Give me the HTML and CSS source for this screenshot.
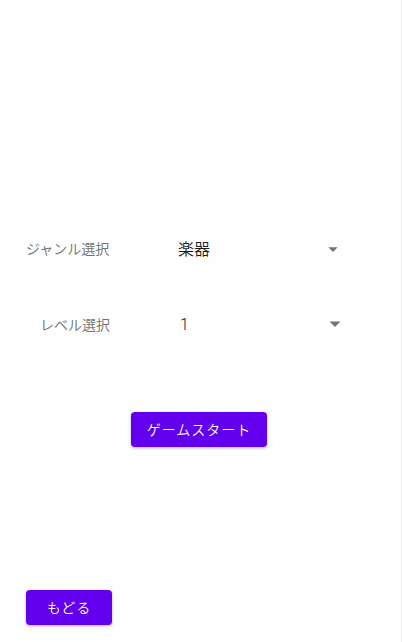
FILE: index.html
```html
<!DOCTYPE html>
<html lang="ja">
<head>
<meta charset="utf-8">
<meta name="viewport" content="width=device-width, initial-scale=1">
<title>ゲーム設定</title>
<link rel="stylesheet" href="styles.css">
</head>
<body>
<form class="screen">
  <div class="row">
    <label class="label" for="genre">ジャンル選択</label>
    <div class="spinner spinner-genre">
      <select id="genre"><option>楽器</option></select>
      <svg class="arrow" width="10" height="5" viewBox="0 0 10 5" aria-hidden="true"><path d="M0.3 0.3h9.4L5 5z"/></svg>
    </div>
  </div>
  <div class="row">
    <label class="label label-level" for="level">レベル選択</label>
    <div class="spinner spinner-level">
      <select id="level"><option>1</option></select>
      <svg class="arrow" width="12" height="6" viewBox="0 0 12 6" aria-hidden="true"><path d="M0.5 0.5h11L6 6z"/></svg>
    </div>
  </div>
  <button class="button start" type="button">ゲームスタート</button>
  <button class="button back" type="button">もどる</button>
</form>
</body>
</html>
```
FILE: styles.css
```css
* {
  box-sizing: border-box;
}

body {
  margin: 0;
  background: #fefefe;
  font-family: Roboto, "Noto Sans CJK JP", sans-serif;
  font-size: 14px;
  font-weight: 350;
}

.screen {
  display: flex;
  flex-direction: column;
  min-height: 100vh;
  padding: 225px 29px 17px 26px;
  border-right: 1px solid #ebebeb;
}

.row {
  display: grid;
  grid-template-columns: 152px 1fr;
  align-items: center;
  height: 48px;
  margin-bottom: 28px;
}

.label {
  color: #707070;
  line-height: 20px;
}

.label-level {
  padding-left: 14px;
}

.spinner {
  position: relative;
  display: flex;
  align-items: center;
}

.spinner-genre {
  margin-right: 34px;
}

.spinner-level {
  margin-left: 2px;
  margin-right: 31px;
  padding-bottom: 2px;
}

.spinner select {
  appearance: none;
  width: 100%;
  height: 46px;
  padding: 0 24px 0 0;
  border: 0;
  background: transparent;
  color: #1a1a1a;
  font: inherit;
  font-size: 16px;
}

.arrow {
  position: absolute;
  right: 0;
  fill: #757575;
  pointer-events: none;
}

.button {
  height: 35px;
  padding: 0 16px 2px;
  border: 0;
  border-radius: 4px;
  background: #6200ee;
  box-shadow: 0 1px 3px rgba(0, 0, 0, 0.3);
  color: #fff;
  font: inherit;
  letter-spacing: 1px;
}

.start {
  align-self: center;
  margin-top: 35px;
}

.back {
  align-self: flex-start;
  min-width: 86px;
  margin-top: auto;
}
```
